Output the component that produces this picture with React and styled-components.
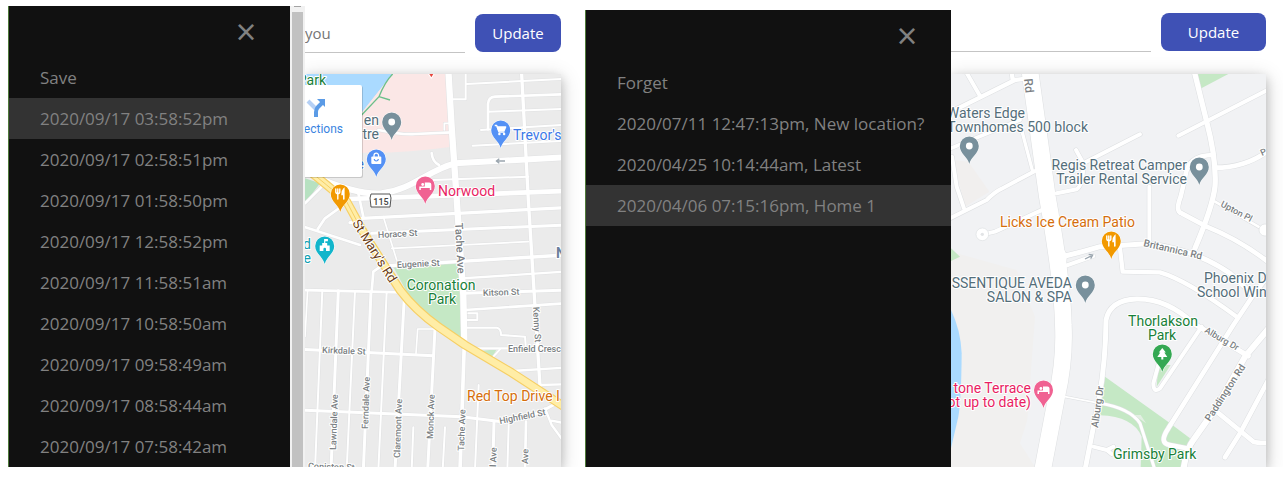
import React from "react";
import styled, { createGlobalStyle } from "styled-components";

const GlobalStyle = createGlobalStyle`
  *, *::before, *::after { box-sizing: border-box; }
  body {
    margin: 0;
    background: #fff;
    font-family: "Open Sans", "Noto Sans", sans-serif;
  }
`;

const Page = styled.main`
  display: grid;
  grid-template-columns: minmax(0, 577fr) minmax(0, 698fr);
  padding: 6px 0 10px 8px;
`;

const Screen = styled.section`
  display: flex;
  overflow: hidden;
  margin-top: ${(p) => p.$top}px;
`;

const Drawer = styled.nav`
  position: relative;
  z-index: 1;
  flex: none;
  width: ${(p) => p.$width}px;
  background: #111;
  border-left: 1px solid #4f7a3a;
`;

const DrawerHead = styled.div`
  display: flex;
  justify-content: flex-end;
  height: ${(p) => p.$height}px;
  padding-right: 32px;
`;

const CloseButton = styled.button`
  width: 24px;
  height: 52px;
  padding: 0;
  border: 0;
  background: none;
  color: #818181;
  font: 36px/52px "Open Sans", sans-serif;
  cursor: pointer;
`;

const DrawerLink = styled.a`
  display: block;
  height: 41px;
  padding-left: 31px;
  background: ${(p) => (p.$active ? "#333" : "transparent")};
  color: #818181;
  font-size: 17px;
  line-height: 41px;
  white-space: nowrap;
  text-decoration: none;
  &:hover { color: #f1f1f1; }
`;

const ScrollTrack = styled.div`
  position: relative;
  z-index: 1;
  flex: none;
  display: flex;
  flex-direction: column;
  align-items: center;
  width: 15px;
  background: #f1f1f1;
`;

const ScrollArrow = styled.div`
  width: 7px;
  height: 1px;
  margin-bottom: 5px;
  background: #a3a3a3;
`;

const ScrollThumb = styled.div`
  flex: 1;
  width: 11px;
  background: #c1c1c1;
`;

const Content = styled.div`
  flex: 1;
  min-width: 0;
  display: flex;
  flex-direction: column;
  padding-right: ${(p) => p.$right}px;
`;

const Toolbar = styled.form`
  display: flex;
  gap: 10px;
  height: ${(p) => p.$height}px;
  padding-top: ${(p) => p.$top}px;
`;

const SearchInput = styled.input`
  flex: 1;
  min-width: 0;
  height: 39px;
  padding: 0;
  border: 0;
  border-bottom: 1px solid #c4c4c4;
  background: none;
  color: #333;
  font: 15px "Open Sans", sans-serif;
  &::placeholder { color: #757575; opacity: 1; }
`;

const UpdateButton = styled.button`
  flex: none;
  width: ${(p) => p.$width}px;
  height: 38px;
  padding: 0;
  border: 0;
  border-radius: 8px;
  background: #3f51b5;
  color: #fff;
  font: 15px "Open Sans", sans-serif;
  cursor: pointer;
`;

const MapFrame = styled.div`
  flex: 1;
  min-height: 0;
  display: flex;
  box-shadow: 0 4px 10px rgba(0, 0, 0, 0.2), 0 4px 20px rgba(0, 0, 0, 0.19);
`;

const MapSvg = styled.svg`
  display: block;
  width: 100%;
  height: 393px;
  font-family: Roboto, sans-serif;
`;

const Label = styled.text`
  font-size: ${(p) => p.$size || 14}px;
  fill: ${(p) => p.$color || "#546e7a"};
  stroke: #fff;
  stroke-width: 2px;
  stroke-linejoin: round;
  paint-order: stroke;
`;

const Street = styled(Label)`
  fill: #7b7f83;
  font-size: ${(p) => p.$size || 9}px;
  font-weight: 500;
`;

const GREEN = "#188038";
const PINK = "#e91e63";
const ORANGE = "#d56e0c";
const BLUE = "#3b78e7";

function Roads({ items, edge }) {
  const common = { fill: "none", strokeLinejoin: "round", strokeLinecap: "round" };
  return (
    <>
      {items.map(([w, d]) => (
        <path key={d} d={d} stroke={edge} strokeWidth={w + 3} {...common} />
      ))}
      {items.map(([w, d]) => (
        <path key={d} d={d} stroke="#fff" strokeWidth={w} {...common} />
      ))}
    </>
  );
}

const glyphs = {
  dot: <circle r="3.4" fill="#fff" />,
  bed: (
    <g fill="#fff">
      <path d="M-6-4h1.500v5h9V4H6V-1.500a2 2 0 0 0-2-2H-.5V.5h-4V-4H-6V4h1.500V2h9v2H6V.5H-6z" />
      <circle cx="-2.600" cy="-1.500" r="1.400" />
    </g>
  ),
  food: (
    <g fill="none" stroke="#fff" strokeLinecap="round">
      <path d="M-4.500-5v3q0 1.500 2 1.500t2-1.500v-3M-2.500-5v10" strokeWidth="1.400" />
      <path d="M3.500 5V-5Q1.800-3.500 1.800.5H3.500" strokeWidth="1.600" fill="#fff" />
    </g>
  ),
  cart: (
    <g fill="none" stroke="#fff" strokeWidth="1.300" strokeLinejoin="round">
      <path d="M-6-4.500h2l2.300 6.500h5.500" />
      <path d="M-3.400-3H5L3.500.5h-5.500z" fill="#fff" />
      <circle cx="-1.300" cy="4" r=".6" />
      <circle cx="3.400" cy="4" r=".6" />
    </g>
  ),
  bag: (
    <g>
      <path d="M-2.300-2v-1.500a2.300 2.300 0 0 1 4.600 0v1.500" fill="none" stroke="#fff" strokeWidth="1.300" />
      <rect x="-5" y="-2.500" width="10" height="7.500" rx="1" fill="#fff" />
      <path d="M-2 0a2 2 0 0 0 4 0" fill="none" stroke="#5491f5" strokeWidth="1.200" />
    </g>
  ),
  tree: <path d="M0-6 3.500-1.500H2L5 3H1V5.500H-1V3H-5L-2-1.500h-1.500z" fill="#fff" />,
  fort: (
    <g>
      <path d="M-.6-7H3.200v2.200H.6V-3H2.500V-.5H5V5H-5V-.5h2.500V-3h1.900z" fill="#fff" />
      <path d="M-1.300 5V3a1.300 1.300 0 0 1 2.600 0v2z" fill="#12b5cb" />
    </g>
  ),
};

function Pin({ x, y, color, glyph }) {
  return (
    <g transform={`translate(${x} ${y})`}>
      <path
        d="M0 18C-1.500 11-9.500 7.500-9.500 0a9.500 9.500 0 0 1 19 0C9.500 7.500 1.500 11 0 18z"
        fill={color}
        stroke="#fff"
        strokeWidth="1"
        paintOrder="stroke"
      />
      {glyphs[glyph]}
    </g>
  );
}

const norwoodRoads = [
  [6, "M512 222V298H470"],
  [6, "M515 252L800 237"],
  [10, "M680 222L700 600L735 1160"],
  [8, "M800 283L600 290Q580 292 579 312V388"],
  [6, "M580 335L800 327"],
  [6, "M558 390L800 375"],
  [6, "M533 437L800 423"],
  [8, "M250 390Q320 405 360 402L470 397"],
  [5, "M465 370H448V390"],
  [18, "M810 472L480 490C400 510 350 570 260 580C200 585 130 560 60 530"],
  [8, "M410 459Q412 485 432 495"],
  [6, "M415 540L700 530"],
  [14, "M160 597L370 590L810 573"],
  [8, "M190 580L205 650"],
  [10, "M200 655L810 623"],
  [10, "M165 668L190 668"],
  [9, "M230 700L810 675"],
  [5, "M290 745L700 725"],
  [5, "M265 650L305 780"],
  [10, "M270 798L810 765"],
  [7, "M500 835L810 815"],
  [9, "M510 880L810 870"],
  [8, "M510 930L810 910"],
  [6, "M520 940H547V960H518"],
  [6, "M515 983H605Q618 985 618 1005L690 1010L692 1035"],
  [8, "M20 870L320 877"],
  [9, "M20 1048L415 1067"],
  [5, "M363 1060L368 987H420"],
  [9, "M20 1230L500 1250L620 1265Q700 1260 775 1215"],
  [5, "M38 870L30 1010"],
  [6, "M82 870L60 1410"],
  [9, "M130 872L108 1410"],
  [6, "M180 873L155 1410"],
  [9, "M228 875L205 1410"],
  [6, "M275 877L250 1410"],
  [9, "M328 890L300 1410"],
  [9, "M420 985L398 1410"],
  [6, "M355 1282L350 1410"],
  [6, "M450 1282L443 1410"],
  [6, "M551 1155L540 1410"],
  [9, "M597 1265L593 1410"],
  [6, "M641 1275L637 1410"],
  [8, "M693 1265L690 1410"],
  [8, "M20 678L195 735"],
  [8, "M230 875L235 815L270 790"],
  [8, "M68 688L90 655L150 612"],
  [8, "M30 610L90 550"],
  [7, "M520 1045H800"],
  [6, "M595 1070L615 1048"],
  [7, "M650 1113L810 1103"],
  [7, "M735 1155L810 1153"],
  [7, "M750 1225L770 1275L810 1330M770 1262L810 1270"],
  [11, "M508 1030L495 1410"],
  [19, "M460 210L470 380L488 640L505 885L508 1030"],
];

const maryRoad = "M40 510L95 555L155 605L210 705L315 870Q360 930 430 980L510 1035L650 1118L810 1222";

function NorwoodMap() {
  return (
    <MapSvg viewBox="305 74 256 393" preserveAspectRatio="xMinYMin slice" role="img" aria-label="Map of Norwood">
      <rect x="305" y="74" width="256" height="393" fill="#ebebeb" />
      <svg x="305" y="74" width="256" height="393" viewBox="30 222 768 1179">
        <path d="M30 222H292L200 338H30z" fill="#aadaff" />
        <path d="M292 222H458L470 440Q330 460 200 458V338z" fill="#fbe7e6" />
        <path d="M30 535L75 550L30 610z" fill="#b7e1c1" />
        <path d="M293 222Q270 245 252 290L200 345M252 290L285 300" fill="none" stroke="#6cc08b" strokeWidth="4" />
        <path d="M295 800L492 790L502 1015L420 965L340 885z" fill="#c5e8c5" />
        <path d="M558 1053L605 1048L590 1075z" fill="#c5e8c5" />
        <Roads items={norwoodRoads} edge="#e0e1e2" />
        <g fill="none" strokeLinejoin="round">
          <path d={maryRoad} stroke="#f6cf65" strokeWidth="27" />
          <path d={maryRoad} stroke="#ffeda6" strokeWidth="20" />
          <path d="M40 510L95 555L155 605L200 690" stroke="#f6cf65" strokeWidth="3" />
          <path d="M630 483H604M613 476L604 483L613 490" stroke="#9aa5ae" strokeWidth="4" />
        </g>
        <path d="M399 222H419L409 237z" fill="#fff" />
        <path d="M403 222H415L409 232z" fill="#e8453c" />
      </svg>

      <Label x="326" y="85" textAnchor="end" $color={GREEN}>Park</Label>
      <Label x="379" y="125" textAnchor="end">en</Label>
      <Label x="379" y="139" textAnchor="end">tre</Label>
      <Label x="364" y="169" textAnchor="end" $color={BLUE}>e</Label>
      <Label x="513" y="140" $color={BLUE}>Trevor's</Label>
      <Label x="438" y="196" $color={PINK}>Norwood</Label>
      <Label x="311" y="249" textAnchor="end" $color="#129eaf">d</Label>
      <Label x="311" y="263" textAnchor="end" $color="#129eaf">e</Label>
      <Label x="441" y="290" textAnchor="middle" $color={GREEN}>Coronation</Label>
      <Label x="442" y="304" textAnchor="middle" $color={GREEN}>Park</Label>
      <Label x="467" y="401" $color={ORANGE}>Red Top Drive I</Label>
      <Label x="556" y="258" $color="#6b7f9c" fontWeight="700">N</Label>

      <Street transform="translate(378 238) rotate(-3)">Horace St</Street>
      <Street transform="translate(397 268) rotate(-3)">Eugenie St</Street>
      <Street transform="translate(483 296) rotate(-2)">Kitson St</Street>
      <Street transform="translate(322 353) rotate(2)">Kirkdale St</Street>
      <Street transform="translate(508 352)">Enfield Cresc</Street>
      <Street transform="translate(500 424) rotate(-11)">Highfield St</Street>
      <Street transform="translate(308 469) rotate(2)">Coniston St</Street>
      <Street transform="translate(533 307) rotate(87)">Kenny St</Street>
      <Street transform="translate(455 223) rotate(87)" $size={11}>Tache Ave</Street>
      <Street transform="translate(336 450) rotate(-88)">Lawndale Ave</Street>
      <Street transform="translate(368 429) rotate(-88)">Ferndale Ave</Street>
      <Street transform="translate(400 458) rotate(-88)">Claremont Ave</Street>
      <Street transform="translate(433 439) rotate(-88)">Monck Ave</Street>
      <Street transform="translate(464 451) rotate(-88)">Tache Ave</Street>
      <Street transform="translate(496 467) rotate(-88)">l Ave</Street>
      <Street transform="translate(528 464) rotate(-88)">Ave</Street>
      <Label transform="translate(352 223) rotate(58)" $size={13} $color="#6b3d14">St Mary's Rd</Label>

      <path d="M371 194H390L391 198L390 207H371L370 198z" fill="#fff" stroke="#555" />
      <text x="381" y="205" textAnchor="middle" fontSize="9" fontWeight="500" fill="#444">115</text>

      <Pin x={391.700} y={122} color="#78909c" glyph="dot" />
      <Pin x={376.300} y={159} color="#5491f5" glyph="bag" />
      <Pin x={500.700} y={130} color="#5491f5" glyph="cart" />
      <Pin x={340.300} y={194} color="#f29900" glyph="food" />
      <Pin x={425.300} y={186} color="#f06292" glyph="bed" />
      <Pin x={324.700} y={246} color="#12b5cb" glyph="fort" />

      <rect x="300" y="86" width="63" height="92" rx="2" fill="#000" opacity=".15" />
      <rect x="300" y="85" width="62" height="92" rx="2" fill="#fff" />
      <path d="M308 101L316 109" stroke="#b5d0f5" strokeWidth="4" />
      <path d="M316 117V112Q316 109 318 107L322 103" fill="none" stroke="#5b9be6" strokeWidth="4" />
      <path d="M317 99H325V107z" fill="#5b9be6" />
      <text x="343" y="133" textAnchor="end" fontSize="12" fill="#3a84df">ections</text>
    </MapSvg>
  );
}

const grimsbyRoads = [
  [10, "M245 390L278 515"],
  [12, "M78 215L120 288"],
  [13, "M20 342L225 240L265 235M215 215L218 240"],
  [11, "M20 450L240 360"],
  [12, "M36 470L50 560L72 625"],
  [12, "M20 660L140 600Q165 575 185 566L285 513"],
  [12, "M130 703L165 695L310 628"],
  [12, "M350 580L410 568Q430 555 430 490M408 450L430 490L600 403"],
  [12, "M715 407L990 266"],
  [14, "M990 448Q920 503 825 503"],
  [14, "M820 465Q740 465 735 535L722 590Q705 635 725 640L800 680Q900 720 990 790"],
  [12, "M628 560V725"],
  [8, "M825 605L990 700"],
  [12, "M365 750Q380 765 370 800L460 768"],
  [15, "M375 768Q430 755 480 740L620 731Q760 745 870 820L940 885"],
  [13, "M540 745L548 815L660 817Q740 840 890 950"],
  [14, "M990 820L940 885L880 975L685 1285Q655 1330 690 1335L740 1345"],
  [12, "M785 980L660 1165Q640 1180 640 1150L655 1095"],
  [14, "M830 1235L940 1325Q955 1330 990 1328"],
  [14, "M990 1130L900 1300L855 1372"],
  [18, "M990 980L915 1070L830 1220L760 1320Q740 1345 730 1410"],
  [5, "M375 1190L480 1210"],
  [9, "M480 1210Q570 1225 600 1270L645 1410"],
  [12, "M460 1340L500 1350L520 1340M500 1350L515 1362"],
  [15, "M435 1410L478 1190Q497 1080 498 960Q510 900 590 897Q680 895 760 970L925 1068"],
  [16, "M763 215L800 365Q830 480 825 560Q818 620 765 745"],
  [50, "M268 200L322 590Q368 850 370 975Q375 1080 350 1190L306 1420"],
];

function GrimsbyMap() {
  return (
    <MapSvg viewBox="951 74 315 393" preserveAspectRatio="xMinYMin slice" role="img" aria-label="Map of Grimsby Park">
      <rect x="951" y="74" width="315" height="393" fill="#f1f2f4" />
      <svg x="951" y="74" width="315" height="393" viewBox="33 222 945 1179">
        <path d="M33 755L230 810L285 950L262 1260L240 1330L285 1401H33z" fill="#f1f0ef" />
        <path d="M40 480L85 485L148 575L75 620z" fill="#f1efee" />
        <path d="M33 930Q62 990 65 1060Q64 1200 55 1250L33 1345z" fill="#aadaff" />
        <g fill="#c5e8c5">
          <path d="M770 222H865L784 265z" />
          <path d="M33 745L60 770L33 783z" />
          <path d="M495 1130L680 1262L750 1315L722 1401H602L605 1310Q580 1250 480 1246z" />
          <path d="M655 1095L692 1095L650 1160z" />
        </g>
        <Roads items={grimsbyRoads} edge="#dddfe1" />
        <path d="M582 1245L602 1245L618 1270z" fill="#e3efe3" />
        <circle cx="127" cy="703" r="19" fill="#fff" stroke="#dddfe1" strokeWidth="2" />
        <circle cx="127" cy="703" r="5" fill="#e2e4e6" />
        <circle cx="975" cy="690" r="18" fill="#fff" stroke="#dddfe1" strokeWidth="2" />
        <path d="M435 777L457 766M446 763L458 765L452 776" fill="none" stroke="#9aa5ae" strokeWidth="4" />
      </svg>

      <Label x="1025" y="118" textAnchor="end">Waters Edge</Label>
      <Label x="1088" y="132" textAnchor="end">Townhomes 500 block</Label>
      <Label x="1187" y="170" textAnchor="end">Regis Retreat Camper</Label>
      <Label x="1187" y="184" textAnchor="end">Trailer Rental Service</Label>
      <Label x="1000" y="227" $color={ORANGE}>Licks Ice Cream Patio</Label>
      <Label x="1204" y="283">Phoenix D</Label>
      <Label x="1197" y="297">School Win</Label>
      <Label x="1072" y="288" textAnchor="end">SSENTIQUE AVEDA</Label>
      <Label x="1072" y="302" textAnchor="end">SALON &amp; SPA</Label>
      <Label x="1163" y="326" textAnchor="middle" $color={GREEN}>Thorlakson</Label>
      <Label x="1162" y="340" textAnchor="middle" $color={GREEN}>Park</Label>
      <Label x="1031" y="393" textAnchor="end" $color={PINK}>tone Terrace</Label>
      <Label x="1031" y="407" textAnchor="end" $color={PINK}>ot up to date)</Label>
      <Label x="1113" y="459" $color={GREEN}>Grimsby Park</Label>

      <Street transform="translate(1024 79) rotate(84)" $size={12}>Rd</Street>
      <Street transform="translate(1262 156) rotate(-24)">P</Street>
      <Street transform="translate(1220 206) rotate(28)">Upton Pl</Street>
      <Street transform="translate(1143 246) rotate(13)" $size={10}>Britannica Rd</Street>
      <Street transform="translate(1204 332) rotate(30)">Alburg Dr</Street>
      <Street transform="translate(1098 428) rotate(-82)" $size={10}>Alburg Dr</Street>
      <Street transform="translate(1210 422) rotate(-57)" $size={10}>Paddington Rd</Street>

      <Pin x={969.300} y={146} color="#78909c" glyph="dot" />
      <Pin x={1199.300} y={167} color="#78909c" glyph="dot" />
      <Pin x={1111.300} y={241} color="#f29900" glyph="food" />
      <Pin x={1085.300} y={285} color="#78909c" glyph="dot" />
      <Pin x={1162.300} y={354} color="#34a853" glyph="tree" />
      <Pin x={1043.500} y={390} color="#f06292" glyph="bed" />
    </MapSvg>
  );
}

function Menu({ label, width, headHeight, items, active }) {
  return (
    <Drawer $width={width} aria-label={label}>
      <DrawerHead $height={headHeight}>
        <CloseButton type="button" aria-label="Close">×</CloseButton>
      </DrawerHead>
      {items.map((item) => (
        <DrawerLink key={item} href="#" $active={item === active}>{item}</DrawerLink>
      ))}
    </Drawer>
  );
}

const saved = [
  "Save",
  "2020/09/17 03:58:52pm",
  "2020/09/17 02:58:51pm",
  "2020/09/17 01:58:50pm",
  "2020/09/17 12:58:52pm",
  "2020/09/17 11:58:51am",
  "2020/09/17 10:58:50am",
  "2020/09/17 09:58:49am",
  "2020/09/17 08:58:44am",
  "2020/09/17 07:58:42am",
];

const places = [
  "Forget",
  "2020/07/11 12:47:13pm, New location?",
  "2020/04/25 10:14:44am, Latest",
  "2020/04/06 07:15:16pm, Home 1",
];

export default function App() {
  return (
    <>
      <GlobalStyle />
      <Page>
        <Screen $top={0}>
          <Menu label="History" width={282} headHeight={51} items={saved} active={saved[1]} />
          <ScrollTrack>
            <ScrollArrow />
            <ScrollThumb />
          </ScrollTrack>
          <Content $right={24}>
            <Toolbar $height={68} $top={8}>
              <SearchInput aria-label="Location" placeholder="you" />
              <UpdateButton type="button" $width={86}>Update</UpdateButton>
            </Toolbar>
            <MapFrame><NorwoodMap /></MapFrame>
          </Content>
        </Screen>
        <Screen $top={4}>
          <Menu label="Places" width={366} headHeight={52} items={places} active={places[3]} />
          <Content $right={17}>
            <Toolbar $height={64} $top={3}>
              <SearchInput aria-label="Location" />
              <UpdateButton type="button" $width={105}>Update</UpdateButton>
            </Toolbar>
            <MapFrame><GrimsbyMap /></MapFrame>
          </Content>
        </Screen>
      </Page>
    </>
  );
}
